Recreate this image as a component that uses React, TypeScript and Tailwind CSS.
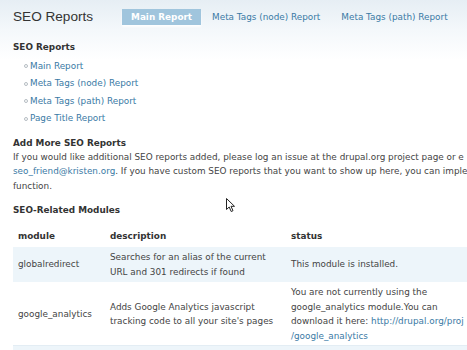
import React from 'react';

const reports = ['Main Report', 'Meta Tags (node) Report', 'Meta Tags (path) Report', 'Page Title Report'];

const Cursor = () => (
  <svg className="absolute left-[226px] top-[198px]" width="10" height="15" viewBox="0 0 10 15">
    <path
      d="M0.5 0.5 L0.5 11.5 L3.2 9 L5.2 13.5 L7 12.7 L5 8.3 L8.5 8.3 Z"
      fill="#ffffff"
      stroke="#222222"
      strokeWidth="1"
      strokeLinejoin="round"
    />
  </svg>
);

const App = () => {
  return (
    <div className="relative w-full h-[350px] overflow-hidden bg-[linear-gradient(to_bottom,#e6eef4_0px,#f4f8fb_30px,#ffffff_60px)] font-['DejaVu_Sans',sans-serif] text-[8.85px] text-[#444]">
      {/* top bar */}
      <div className="flex items-center pt-[9px] pl-[13px]">
        <h1 className="font-['Liberation_Sans',Arial,sans-serif] text-[13.6px] leading-[16px] text-[#333]">SEO Reports</h1>
        <div className="flex ml-[29px] gap-[1px]">
          <span className="h-[16px] leading-[16px] px-[9px] bg-[#a0c5dd] text-white font-bold shadow-[0_2px_2px_rgba(255,255,255,0.9)]">
            Main Report
          </span>
          <span className="h-[16px] leading-[16px] px-[10px] text-[#3a7aa5]">Meta Tags (node) Report</span>
          <span className="h-[16px] leading-[16px] px-[10px] text-[#3a7aa5]">Meta Tags (path) Report</span>
        </div>
      </div>

      <div className="pl-[13px]">
        <h2 className="mt-[15.5px] font-bold leading-[13px] text-[#333]">SEO Reports</h2>
        <ul className="mt-[4px] pl-[11px]">
          {reports.map((r) => (
            <li key={r} className="flex items-center leading-[17.5px]">
              <span className="w-[4px] h-[4px] rounded-full border border-[#b5bcc2] mr-[2px]" />
              <span className="text-[#3a7aa5]">{r}</span>
            </li>
          ))}
        </ul>

        <h2 className="mt-[9px] font-bold leading-[13px] text-[#333]">Add More SEO Reports</h2>
        <p className="whitespace-nowrap leading-[14.5px]">
          If you would like additional SEO reports added, please log an issue at the drupal.org project page or e
          <br />
          <span className="text-[#3a7aa5]">seo_friend@kristen.org</span>. If you have custom SEO reports that you want to show up here, you can imple
          <br />
          function.
        </p>

        <h2 className="mt-[10.8px] font-bold leading-[13px] text-[#333]">SEO-Related Modules</h2>

        <table className="mt-[10px] w-[640px] border-collapse text-left">
          <thead>
            <tr className="h-[20px]">
              <th className="w-[92px] px-[5px] font-bold text-[#333]">module</th>
              <th className="w-[181px] px-[5px] font-bold text-[#333]">description</th>
              <th className="px-[5px] font-bold text-[#333]">status</th>
            </tr>
          </thead>
          <tbody className="leading-[14.5px]">
            <tr className="h-[36px] bg-[#edf5fa] border-b border-white">
              <td className="px-[5px] py-[2px]">globalredirect</td>
              <td className="px-[5px] py-[2px] whitespace-nowrap">
                Searches for an alias of the current
                <br />
                URL and 301 redirects if found
              </td>
              <td className="px-[5px] py-[2px]">This module is installed.</td>
            </tr>
            <tr className="h-[62px] bg-white border-b border-[#e3edf4]">
              <td className="px-[5px] py-[2px]">google_analytics</td>
              <td className="px-[5px] py-[2px] whitespace-nowrap">
                Adds Google Analytics javascript
                <br />
                tracking code to all your site's pages
              </td>
              <td className="px-[5px] py-[2px] whitespace-nowrap">
                You are not currently using the
                <br />
                google_analytics module.You can
                <br />
                download it here: <span className="text-[#3a7aa5]">http://drupal.org/proj</span>
                <br />
                <span className="text-[#3a7aa5]">/google_analytics</span>
              </td>
            </tr>
            <tr className="h-[36px] bg-[#edf5fa]">
              <td className="px-[5px] py-[2px]" colSpan={3}></td>
            </tr>
          </tbody>
        </table>
      </div>

      <Cursor />
    </div>
  );
};

export default App;
